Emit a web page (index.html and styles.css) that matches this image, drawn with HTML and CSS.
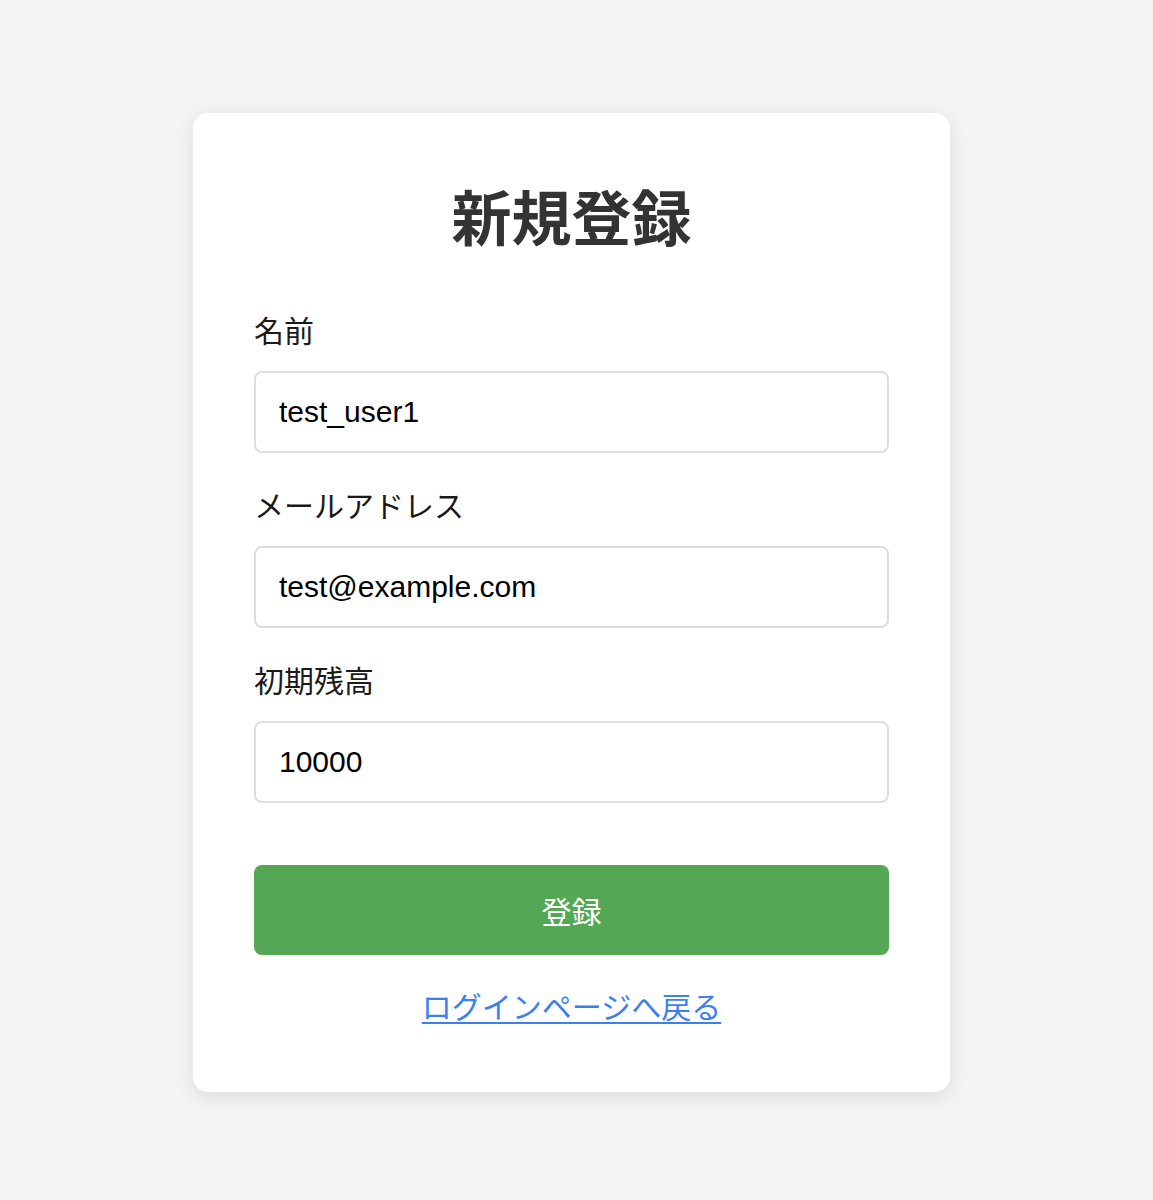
FILE: index.html
```html
<!DOCTYPE html>
<html lang="ja">
<head>
<meta charset="utf-8">
<title>新規登録</title>
<link rel="stylesheet" href="styles.css">
</head>
<body>
<div class="page">
  <form class="card">
    <h2 class="title">新規登録</h2>
    <div class="field">
      <label class="label">名前</label>
      <input class="input" type="text" value="test_user1">
    </div>
    <div class="field">
      <label class="label">メールアドレス</label>
      <input class="input" type="text" value="test@example.com">
    </div>
    <div class="field">
      <label class="label">初期残高</label>
      <input class="input" type="text" value="10000">
    </div>
    <button class="submit" type="button">登録</button>
    <div class="back"><a class="link" href="#">ログインページへ戻る</a></div>
  </form>
</div>
</body>
</html>
```
FILE: styles.css
```css
html, body {
  margin: 0;
  padding: 0;
  background: #f4f4f4;
}
body {
  font-family: "Liberation Sans", "Noto Sans CJK JP", sans-serif;
}
.page {
  display: flex;
  justify-content: center;
  align-items: flex-start;
  padding: 113px 10px 100px 0;
  box-sizing: border-box;
}
.card {
  width: 757px;
  box-sizing: border-box;
  background: #fff;
  border-radius: 15px;
  box-shadow: 0 5px 20px rgba(0, 0, 0, 0.1);
  padding: 72px 61px 61px;
  display: flex;
  flex-direction: column;
}
.title {
  margin: 0 0 57px;
  font-size: 60px;
  line-height: 72px;
  font-weight: bold;
  color: #333;
  text-align: center;
}
.field {
  display: flex;
  flex-direction: column;
  margin-bottom: 36px;
}
.field:nth-of-type(3) {
  margin-bottom: 62px;
}
.label {
  font-size: 30px;
  line-height: 36px;
  color: #1a1a1a;
  margin-bottom: 21px;
}
.input {
  height: 82px;
  flex-shrink: 0;
  box-sizing: border-box;
  border: 2px solid #ddd;
  border-radius: 8px;
  padding: 0 23px;
  font-family: "Liberation Sans", "Noto Sans CJK JP", sans-serif;
  font-size: 30px;
  color: #000;
  background: #fff;
  outline: none;
}
.submit {
  height: 90px;
  flex-shrink: 0;
  border: none;
  border-radius: 8px;
  background: #54a754;
  color: #fff;
  font-family: "Liberation Sans", "Noto Sans CJK JP", sans-serif;
  font-size: 30px;
  padding: 0;
}
.back {
  margin-top: 35px;
  text-align: center;
  line-height: 36px;
}
.link {
  font-size: 30px;
  color: #3b7ff0;
  text-decoration: underline;
  text-underline-offset: 4px;
  text-decoration-thickness: 2px;
}
```
